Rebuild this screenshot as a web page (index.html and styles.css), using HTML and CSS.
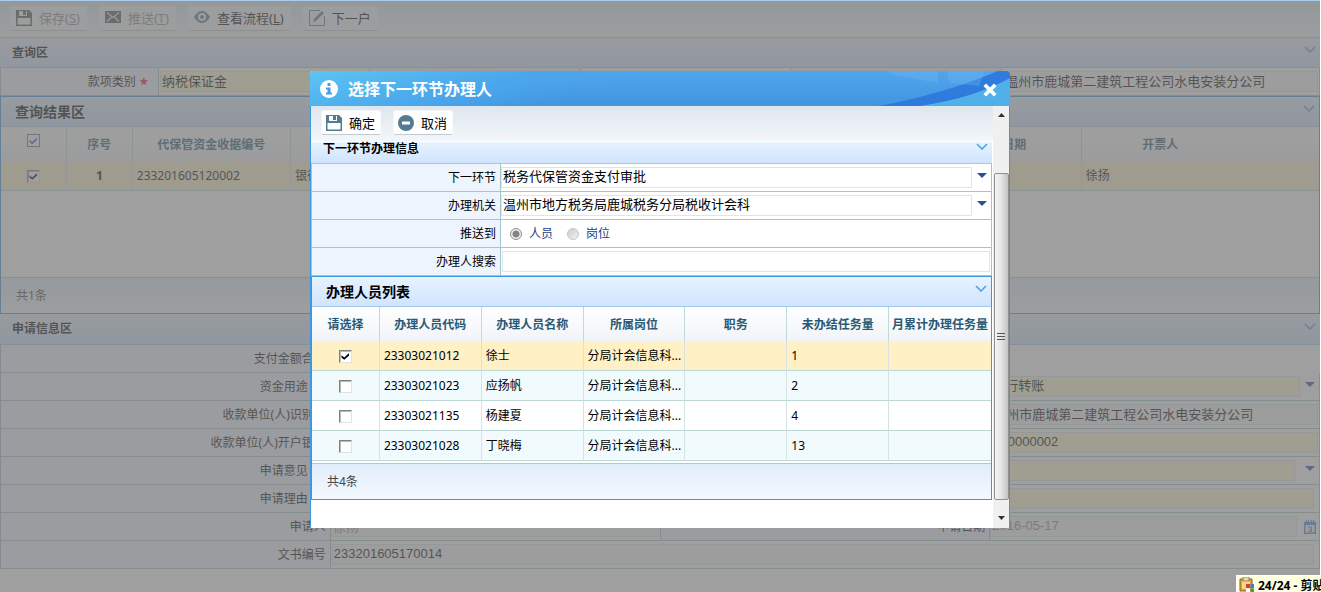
FILE: index.html
```html
<!DOCTYPE html>
<html lang="zh-CN">
<head>
<meta charset="utf-8">
<title>选择下一环节办理人</title>
<link rel="stylesheet" href="styles.css">
</head>
<body>
<svg class="defs" aria-hidden="true">
  <symbol id="i-save" viewBox="0 0 16 16"><path fill-rule="evenodd" d="M0 0h13l3 3v13H0zM3 1v5h8V1zM1.500 8v6.500h13V8z"/><path d="M7 1h3v4H7z"/></symbol>
  <symbol id="i-mail" viewBox="0 0 16 12"><path d="M0 0h16v12H0z"/><path d="M2 1.500l6 5 6-5M2 10.500l4.500-4.500M14 10.500L9.500 6" fill="none" stroke="#eee" stroke-width="1.200"/></symbol>
  <symbol id="i-eye" viewBox="0 0 16 12"><path fill-rule="evenodd" d="M0 6C3 1 6 0 8 0s5 1 8 6c-3 5-6 6-8 6S3 11 0 6zm8-4a4 4 0 1 0 0 8 4 4 0 0 0 0-8z"/><circle cx="8" cy="6" r="2"/></symbol>
  <symbol id="i-edit" viewBox="0 0 16 16"><path d="M11 .5H.5v15h15V6" fill="none" stroke="currentColor"/><path d="M4 12l1-3 8-8 2 2-8 8z"/></symbol>
  <symbol id="i-minus" viewBox="0 0 16 16"><circle cx="8" cy="8" r="8"/><path d="M4 6.500h8v3H4z" fill="#fff"/></symbol>
  <symbol id="i-chev" viewBox="0 0 12 7"><path d="M1 1l5 5 5-5" fill="none" stroke="#4a9fe0" stroke-width="1.500"/></symbol>
  <symbol id="i-down" viewBox="0 0 10 5"><path d="M0 0h10L5 5z"/></symbol>
</svg>

<main class="page">
  <div class="toolbar">
    <button class="btn off" disabled><svg class="ico"><use href="#i-save"/></svg>保存(<u>S</u>)</button>
    <button class="btn off" disabled><svg class="ico up"><use href="#i-mail"/></svg>推送(<u>T</u>)</button>
    <button class="btn"><svg class="ico up"><use href="#i-eye"/></svg>查看流程(<u>L</u>)</button>
    <button class="btn"><svg class="ico"><use href="#i-edit"/></svg>下一户</button>
  </div>

  <section>
    <header class="bar"><h2>查询区</h2><svg class="chev"><use href="#i-chev"/></svg></header>
    <div class="query">
      <label class="lab" for="kind">款项类别<b class="star">*</b></label>
      <div class="val"><input id="kind" class="field need" value="纳税保证金"></div>
      <span class="lab"></span>
      <div class="val"></div>
      <span class="lab"></span>
      <div class="val"><input class="field ro" aria-label="单位名称" value="温州市鹿城第二建筑工程公司水电安装分公司" readonly></div>
    </div>
  </section>

  <section class="panel result">
    <header class="bar big"><h2>查询结果区</h2><svg class="chev"><use href="#i-chev"/></svg></header>
    <table class="grid">
      <colgroup><col class="c5"><col class="c5"><col class="c12"><col class="c12"><col class="c12"><col class="c12"><col class="c12"><col class="c12"><col class="c18"></colgroup>
      <thead><tr><th class="top"><input type="checkbox" class="flat" aria-label="全选" checked></th><th>序号</th><th>代保管资金收据编号</th><th></th><th></th><th></th><th></th><th>开票日期</th><th class="shift">开票人</th></tr></thead>
      <tbody><tr class="sel"><td class="mid"><input type="checkbox" aria-label="选择第1行" checked></td><td class="mid"><b>1</b></td><td>233201605120002</td><td>银行</td><td></td><td></td><td></td><td></td><td>徐扬</td></tr></tbody>
    </table>
    <footer class="foot">共1条</footer>
  </section>

  <section class="apply">
    <header class="bar tall"><h2>申请信息区</h2><svg class="chev"><use href="#i-chev"/></svg></header>
    <div class="row"><span class="lab">支付金额合计</span><div class="val"></div><span class="lab"></span><div class="val open"></div></div>
    <div class="row"><span class="lab">资金用途<b class="star"></b></span><div class="val"></div><span class="lab"></span>
      <div class="val pick"><select class="field need" aria-label="支付方式"><option>银行转账</option></select><svg class="arrow"><use href="#i-down"/></svg></div></div>
    <div class="row"><span class="lab">收款单位(人)识别号</span><div class="val"></div><span class="lab"></span>
      <div class="val"><input class="field ro" aria-label="收款单位名称" value="温州市鹿城第二建筑工程公司水电安装分公司" readonly></div></div>
    <div class="row"><span class="lab">收款单位(人)开户银行</span><div class="val"></div><span class="lab"></span>
      <div class="val"><input class="field need" aria-label="银行账号" value="000000002"></div></div>
    <div class="row wide"><label class="lab" for="opinion">申请意见<b class="star"></b></label>
      <div class="val pick gap"><select id="opinion" class="field need"><option></option></select><svg class="arrow"><use href="#i-down"/></svg></div></div>
    <div class="row wide"><label class="lab" for="reason">申请理由<b class="star"></b></label>
      <div class="val inset"><input id="reason" class="field need"></div></div>
    <div class="row"><label class="lab" for="who">申请人</label><div class="val pick"><input id="who" class="field ro dim" value="徐扬" readonly></div>
      <label class="lab" for="date">申请日期</label>
      <div class="val pick"><input id="date" class="field ro dim" value="2016-05-17" readonly>
        <svg class="cal" viewBox="0 0 12 14"><path d="M.75 2.500h10.500v10.750H.75z" fill="#eef6ff" stroke="#3b93dc" stroke-width="1.500"/><path d="M0 2h12v3H0zM2 0h1v2H2zM4 0h1v2H4zM7 0h1v2H7zM9 0h1v2H9z" fill="#3b93dc"/><path d="M4 7h3.500v4.500H4M5 9.250h2.500" fill="none" stroke="#3b93dc"/></svg></div></div>
    <div class="row wide"><label class="lab" for="doc">文书编号</label>
      <div class="val inset"><input id="doc" class="field ro" value="233201605170014" readonly></div></div>
  </section>
</main>

<div class="mask">
  <div class="dialog" role="dialog" aria-labelledby="dlg-title">
    <header class="dlg-head">
      <svg class="swoosh" viewBox="0 0 140 35" preserveAspectRatio="none"><path d="M8 35C55 27 100 12 128 0h12v35z" fill="#2b74dc" opacity=".85"/><path d="M50 35C90 29 118 19 140 7v28z" fill="#4fb0ea"/><path d="M18 0h50v12L24 4zM77 0h38l-6 15-30-3z" fill="#75bdf2" opacity=".3"/></svg>
      <svg class="info" viewBox="0 0 18 18"><circle cx="9" cy="9" r="9" fill="#fff"/><path d="M7.500 3h3v3h-3zM6 7.500h4.500v5H12v2H6v-2h1.500v-3H6z" fill="#459fe4"/></svg>
      <h1 id="dlg-title">选择下一环节办理人</h1>
      <button class="close" aria-label="关闭"><svg viewBox="0 0 12 12"><path d="M1.500 1.500l9 9M10.500 1.500l-9 9" stroke="#fff" stroke-width="3.200"/></svg></button>
    </header>
    <div class="dlg-main">
      <div class="dlg-body">
        <div class="toolbar inner">
          <button class="btn"><svg class="ico"><use href="#i-save"/></svg>确定</button>
          <button class="btn"><svg class="ico"><use href="#i-minus"/></svg>取消</button>
        </div>
        <header class="bar cut"><h2>下一环节办理信息</h2><svg class="chev"><use href="#i-chev"/></svg></header>
        <div class="form">
          <div class="line"><label class="lab" for="next">下一环节</label><div class="val pick"><select id="next" class="field"><option>税务代保管资金支付审批</option></select><svg class="arrow"><use href="#i-down"/></svg></div></div>
          <div class="line"><label class="lab" for="org">办理机关</label><div class="val pick"><select id="org" class="field"><option>温州市地方税务局鹿城税务分局税收计会科</option></select><svg class="arrow"><use href="#i-down"/></svg></div></div>
          <div class="line"><span class="lab">推送到</span><div class="val radios"><label><input type="radio" name="to" checked>人员</label><label><input type="radio" name="to">岗位</label></div></div>
          <div class="line"><label class="lab" for="find">办理人搜索</label><div class="val"><input id="find" class="field"></div></div>
        </div>
        <section class="panel staff">
          <header class="bar big"><h2>办理人员列表</h2><svg class="chev"><use href="#i-chev"/></svg></header>
          <table class="grid">
            <colgroup><col class="c10"><col class="c15"><col class="c15"><col class="c15"><col class="c15"><col class="c15"><col class="c15"></colgroup>
            <thead><tr><th>请选择</th><th>办理人员代码</th><th>办理人员名称</th><th>所属岗位</th><th>职务</th><th>未办结任务量</th><th>月累计办理任务量</th></tr></thead>
            <tbody>
              <tr class="sel"><td class="mid"><input type="checkbox" aria-label="徐士" checked></td><td>23303021012</td><td>徐士</td><td>分局计会信息科...</td><td></td><td>1</td><td></td></tr>
              <tr class="alt"><td class="mid"><input type="checkbox" aria-label="应扬帆"></td><td>23303021023</td><td>应扬帆</td><td>分局计会信息科...</td><td></td><td>2</td><td></td></tr>
              <tr><td class="mid"><input type="checkbox" aria-label="杨建夏"></td><td>23303021135</td><td>杨建夏</td><td>分局计会信息科...</td><td></td><td>4</td><td></td></tr>
              <tr class="alt"><td class="mid"><input type="checkbox" aria-label="丁晓梅"></td><td>23303021028</td><td>丁晓梅</td><td>分局计会信息科...</td><td></td><td>13</td><td></td></tr>
            </tbody>
          </table>
          <footer class="foot">共4条</footer>
        </section>
      </div>
      <div class="scroll" aria-hidden="true">
        <svg class="tri" viewBox="0 0 7 4"><path d="M0 4h7L3.500 0z" fill="#333"/></svg>
        <div class="thumb"><svg viewBox="0 0 8 8"><path d="M0 .5h8M0 3.500h8M0 6.500h8" stroke="#555"/></svg></div>
        <svg class="tri" viewBox="0 0 7 4"><path d="M0 0h7L3.500 4z" fill="#333"/></svg>
      </div>
    </div>
  </div>
</div>

<div class="tip">
  <svg viewBox="0 0 16 16"><path d="M1 2h12v12H1z" fill="#d9a441" stroke="#8a6420"/><path d="M3 4h8v8H3z" fill="#f5d88c"/><path d="M4 0h6v4H4z" fill="#e8d9a8" stroke="#6b5a2a" stroke-width=".6"/><path d="M7 7h4v4H7z" fill="#e03a2a"/><path d="M11.500 7H15v4h-3.500z" fill="#3d7de0"/><path d="M7 11.500h4V15H7z" fill="#fff"/><path d="M11.500 11.500H15V15h-3.500z" fill="#35a845"/></svg>
  <span>24/24 - 剪贴</span>
</div>
</body>
</html>
```

FILE: styles.css
```css
* { box-sizing: border-box; }

html, body { height: 100%; }

body {
  margin: 0;
  overflow: hidden;
  background: #fff;
  color: #000;
  font: 12px/16px "Noto Sans", "Noto Sans CJK SC", sans-serif;
}

h1, h2 { margin: 0; }
.defs { display: none; }

.page {
  margin-right: 1px;
  border-top: 1px solid #a8ccec;
}

/* toolbars */
.toolbar {
  display: flex;
  align-items: center;
  gap: 12px;
  height: 37px;
  padding: 0 10px 2px;
  background: linear-gradient(#dde7ed, #f4f6fa);
  border-bottom: 1px solid #b4cfe0;
}
.btn {
  display: flex;
  align-items: center;
  height: 25px;
  padding: 0 6px 0 5px;
  border: 1px solid #f4f8fb;
  border-bottom-color: #c3cbd1;
  border-radius: 3px;
  background: #f4f8fa;
  color: #000;
  font: 13px/18px "Noto Sans", "Noto Sans CJK SC", sans-serif;
}
.btn.off { color: #8b8b8b; }
.ico {
  width: 16px;
  height: 16px;
  margin-right: 7px;
  color: #557b93;
  fill: currentColor;
}
.off .ico { color: #555; }
.ico.up { height: 14px; margin-bottom: 3px; }

/* section bars */
.bar {
  display: flex;
  align-items: center;
  justify-content: space-between;
  height: 30px;
  padding: 0 4px 0 12px;
  background: linear-gradient(#e6f3ff, #d0e4fd);
  border-bottom: 1px solid #a3c8ec;
}
.bar.tall { height: 31px; }
.bar h2 { font-size: 12px; line-height: 16px; }
.bar.big { padding-left: 14px; }
.bar.big h2 { font-size: 14px; line-height: 20px; }
.chev { width: 12px; height: 7px; margin-bottom: 6px; }

/* label and value cells */
.lab {
  display: flex;
  align-items: center;
  justify-content: flex-end;
  padding-right: 4px;
  background: #edf4fd;
  border-right: 1px solid #a3c7c9;
  border-bottom: 1px solid #a3c7c9;
  white-space: nowrap;
  overflow: hidden;
}
.star {
  width: 8px;
  margin: 4px 6px 0 4px;
  color: #f00020;
  font-size: 14px;
}
.val {
  display: flex;
  align-items: center;
  min-width: 0;
  padding: 0 1px;
  background: #fff;
  border-right: 1px solid #a3c7c9;
  border-bottom: 1px solid #a3c7c9;
}
.val.open { border-color: transparent; }
.val.inset { padding-right: 5px; }
.val.pick { padding-left: 0; }
.field {
  flex: 1;
  min-width: 0;
  height: 21px;
  padding: 0 1px 2px;
  border: 1px solid #dbe6ee;
  border-radius: 0;
  outline: 0;
  appearance: none;
  background: #fff;
  color: #000;
  font: 13px/18px "Liberation Sans", "Noto Sans CJK SC", sans-serif;
}
.need { background: #fffbd0; }
.ro { background: #f7f7f7; }
.dim { color: #888; }
.arrow { width: 10px; height: 5px; margin: 0 3px 4px 5px; fill: #27509b; }
.gap .arrow { margin-left: 10px; }
.cal { width: 12px; height: 14px; margin: 0 2px 0 7px; }

.query {
  display: grid;
  grid-template-columns: 158fr 211fr 211fr 211fr 211fr 318fr;
  height: 28px;
  border-left: 1px solid #a3c7c9;
}
.row {
  display: grid;
  grid-template-columns: repeat(4, 1fr);
  height: 28px;
  border-left: 1px solid #a3b7c9;
}
.row.wide { grid-template-columns: 1fr 3fr; }

/* bordered panels with a table */
.panel { border: 1px solid #3f97dd; }
.result { display: flex; flex-direction: column; height: 218px; }
.result .foot { margin-top: auto; }

.grid {
  width: 100%;
  border-collapse: separate;
  border-spacing: 0;
  table-layout: fixed;
}
.c5 { width: 5%; }
.c12 { width: 12%; }
.c18 { width: 18%; }
.c10 { width: 10%; }
.c15 { width: 15%; }
.grid th {
  height: 34px;
  padding: 2px 0 0;
  background: linear-gradient(#fff, #f1f4f8);
  border-right: 1px solid #c0dada;
  color: #2a5873;
  font-weight: bold;
  white-space: nowrap;
}
.grid th.top { padding: 5px 0 0; vertical-align: top; }
.grid th.shift { padding-right: 80px; }
.grid td {
  height: 30px;
  padding: 0 0 0 4px;
  border-right: 1px solid #d5e4e2;
  border-bottom: 1px solid #bcd8d6;
  white-space: nowrap;
}
.grid th:last-child, .grid td:last-child { border-right: 0; }
.grid .mid { padding: 0; text-align: center; }
.sel td { background: #fff0c5; }
.alt td { background: #f1fafd; }
.foot {
  height: 36px;
  padding: 10px 15px;
  background: linear-gradient(#e0edfb, #f5f9ff);
  border-top: 1px solid #a3c8ec;
  color: #444;
}

input[type="checkbox"] {
  display: inline-grid;
  place-items: center;
  width: 13px;
  height: 13px;
  margin: 0;
  appearance: none;
  background: #fff;
  border: 1px solid;
  border-color: #808080 #e2e2e2 #e2e2e2 #808080;
  box-shadow: inset 1px 1px #b9b9b9;
  vertical-align: middle;
}
input[type="checkbox"]:checked::before {
  content: "";
  width: 8px;
  height: 7px;
  background: currentColor;
  clip-path: polygon(0 35%, 35% 68%, 100% 0, 100% 35%, 35% 100%, 0 68%);
}
input.flat { border-color: #777; box-shadow: none; color: #2e68b0; }

/* dialog */
.mask {
  position: fixed;
  inset: 1px 1px 0 0;
  display: flex;
  justify-content: center;
  align-items: flex-start;
  padding-top: 70px;
  background: rgba(118, 118, 118, 0.7);
}
.dialog {
  width: 700px;
  max-width: 100%;
  background: #fff;
  border-radius: 3px 3px 0 0;
}
.dlg-head {
  position: relative;
  display: flex;
  align-items: center;
  height: 35px;
  padding: 0 13px 0 10px;
  overflow: hidden;
  border-radius: 3px 3px 0 0;
  background: linear-gradient(165deg, #5cc4f2 0, #4aa6ec 60px, transparent 90px), linear-gradient(#50a5ef, #4296de);
}
.swoosh {
  position: absolute;
  top: 0;
  right: 0;
  width: 140px;
  height: 35px;
}
.info { width: 18px; height: 18px; margin-right: 10px; }
.dlg-head h1 {
  flex: 1;
  color: #fff;
  font-size: 16px;
  line-height: 22px;
}
.close {
  position: relative;
  width: 14px;
  height: 14px;
  margin-top: 3px;
  padding: 0;
  border: 0;
  background: none;
}
.close svg { display: block; width: 14px; height: 14px; }

.dlg-main {
  display: flex;
  border: solid #3f97dd;
  border-width: 0 1px;
}
.dlg-body { flex: 1; min-width: 0; padding-bottom: 28px; }
.inner { height: 36px; border-bottom-color: #fff; }
.inner .btn { background: #fff; padding: 0 5px 0 4px; }
.bar.cut {
  align-items: flex-start;
  height: 22px;
  margin-right: 1px;
}
.cut h2 { line-height: 14px; }
.cut .chev { margin-top: 1px; }
.form { margin-right: 1px; border-left: 1px solid #a3c7c9; }
.line {
  display: grid;
  grid-template-columns: 189fr 491fr;
  height: 28px;
}
.radios { gap: 14px; padding-left: 9px; color: #1d3f86; }
.radios label { display: flex; align-items: center; gap: 7px; }
.radios input {
  width: 12px;
  height: 12px;
  margin: 0;
  appearance: none;
  border: 1px solid #c5c5c5;
  border-radius: 50%;
  background: linear-gradient(135deg, #ccc, #f2f2f2);
}
.radios input:checked {
  border-color: #8c8c8c;
  background: radial-gradient(#858585 0 3px, #f2f2f2 4px);
}
.staff { margin-right: 1px; }
.staff .foot { margin-top: 2px; }

.scroll {
  display: flex;
  flex-direction: column;
  align-items: center;
  width: 16px;
  padding: 7px 0 8px;
  background: #f0f0f0;
}
.tri { width: 7px; height: 4px; }
.thumb {
  display: flex;
  align-items: center;
  justify-content: center;
  flex: 1;
  width: 15px;
  margin: 56px 0 16px;
  border: 1px solid #8e8e8e;
  border-radius: 2px;
  background: linear-gradient(90deg, #f6f6f6, #e3e3e5 50%, #c4c4c8);
}
.thumb svg { width: 8px; height: 8px; }

/* clipboard notice in the window corner */
.tip {
  position: fixed;
  right: 0;
  bottom: 0;
  display: flex;
  gap: 3px;
  width: 85px;
  height: 17px;
  padding: 1px 0 0 2px;
  overflow: hidden;
  border: solid #fff;
  border-width: 1px 0 0 1px;
  background: #ffffe1;
  font-weight: bold;
  line-height: 18px;
  white-space: nowrap;
}
.tip svg { flex: none; width: 16px; height: 16px; }
```
